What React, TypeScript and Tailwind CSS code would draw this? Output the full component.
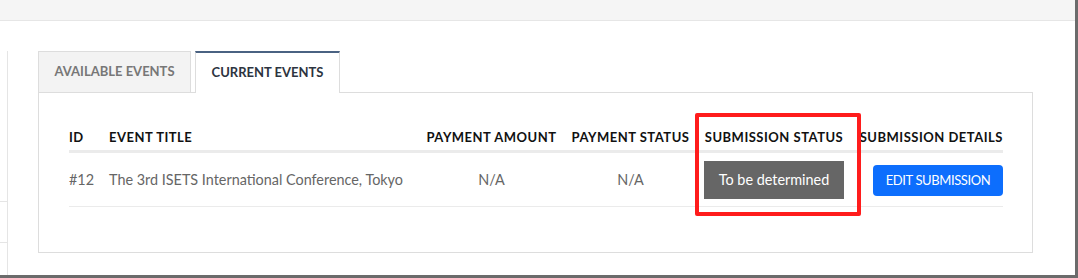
import React from "react";

export default function App() {
  return (
    <div
      className="relative w-[1078px] h-[278px] bg-white overflow-hidden border-r-[3px] border-b-[3px] border-[#6b6b6b] flex flex-col"
      style={{ fontFamily: "Lato, 'Liberation Sans', sans-serif" }}
    >
      <div className="h-[21px] shrink-0 bg-[#f5f5f5] border-b border-[#e6e6e6]" />
      <div className="flex flex-1">
        <div className="w-[8px] shrink-0 mt-[30px] border-r border-[#e5e5e5] flex flex-col">
          <div className="h-[151px] border-b border-[#e5e5e5]" />
          <div className="h-[41px] border-b border-[#e5e5e5]" />
        </div>
        <div className="pl-[30px] pt-[30px]">
          <div className="flex gap-[4px] -mb-px relative z-10">
            <div className="w-[153px] h-[42px] flex items-center justify-center bg-[#f3f3f3] border border-[#dddddd] text-[13px] font-bold text-[#777777]">
              AVAILABLE EVENTS
            </div>
            <div className="w-[145px] h-[42px] flex items-center justify-center bg-white border-x border-[#dddddd] border-t-2 border-t-[#4a6282] text-[13px] font-bold text-[#2d3440]">
              CURRENT EVENTS
            </div>
          </div>
          <div className="w-[995px] border border-[#dddddd] pt-[35px] pl-[30px] pr-[29px] pb-[45px]">
            <div className="grid grid-cols-[40px_310px_145px_133px_154px_152px] text-[13px] leading-[18px] tracking-[0.5px] font-bold text-[#111111] pb-[4px] border-b-[3px] border-[#ebebeb]">
              <div>ID</div>
              <div>EVENT TITLE</div>
              <div className="text-center">PAYMENT AMOUNT</div>
              <div className="text-center">PAYMENT STATUS</div>
              <div className="text-center">SUBMISSION STATUS</div>
              <div className="text-right">SUBMISSION DETAILS</div>
            </div>
            <div className="grid grid-cols-[40px_310px_145px_133px_154px_152px] items-center text-[14.4px] leading-[20px] text-[#666666] pt-[8px] pb-[7px] border-b border-[#ebebeb]">
              <div>#12</div>
              <div>The 3rd ISETS International Conference, Tokyo</div>
              <div className="text-center">N/A</div>
              <div className="text-center">N/A</div>
              <div className="flex justify-center">
                <div className="w-[140px] h-[38px] bg-[#666666] text-white flex items-center justify-center text-[14.4px]">
                  To be determined
                </div>
              </div>
              <div className="flex justify-end">
                <button className="w-[130px] h-[31px] bg-[#0d6efd] text-white rounded-[4px] text-[13px] tracking-[-0.4px] flex items-center justify-center">
                  EDIT SUBMISSION
                </button>
              </div>
            </div>
          </div>
        </div>
      </div>
      <div className="absolute left-[695px] top-[113px] w-[166px] h-[103px] border-4 border-[#ff1c1c] rounded-[2px] pointer-events-none" />
    </div>
  );
}
